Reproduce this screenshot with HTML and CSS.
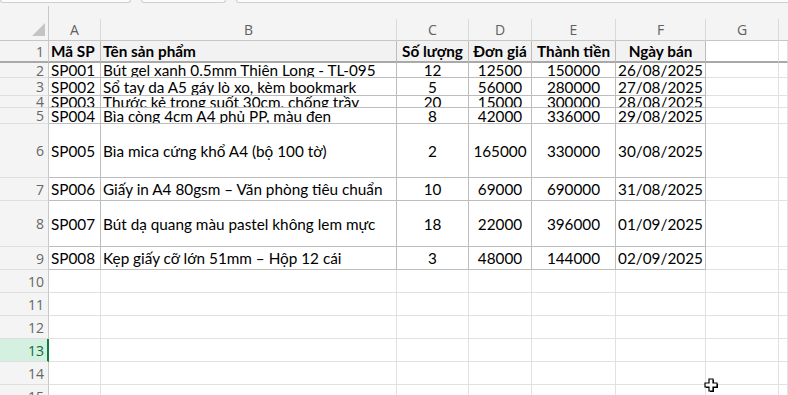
FILE: index.html
```html
<!DOCTYPE html>
<html lang="vi">
<head>
<meta charset="utf-8">
<title>Sheet</title>
<link rel="stylesheet" href="styles.css">
</head>
<body>
<div class="app">
  <div class="topbar">
    <div class="fields">
      <div class="field f1"></div>
      <div class="field f2"></div>
      <div class="field f3"></div>
    </div>
    <div class="tb-rest"><div class="tb-left"></div></div>
  </div>
  <div class="sheet">
    <div class="ch corner"><svg width="13" height="13" viewBox="0 0 13 13"><polygon points="13,0 13,13 0,13" fill="#c4c4c4"/></svg></div>
    <div class="ch">A</div><div class="ch">B</div><div class="ch">C</div><div class="ch">D</div><div class="ch">E</div><div class="ch">F</div><div class="ch">G</div><div class="ch chlast"></div>

    <div class="rh r1">1</div>
    <div class="c d hd r1 l">Mã SP</div><div class="c d hd r1 l">Tên sản phẩm</div><div class="c d hd r1">Số lượng</div><div class="c d hd r1">Đơn giá</div><div class="c d hd r1">Thành tiền</div><div class="c d hd r1">Ngày bán</div><div class="c r1"></div><div class="c r1"></div>

    <div class="rh">2</div>
    <div class="c d l">SP001</div><div class="c d l">Bút gel xanh 0.5mm Thiên Long - TL-095</div><div class="c d">12</div><div class="c d">12500</div><div class="c d">150000</div><div class="c d">26/08/2025</div><div class="c"></div><div class="c"></div>

    <div class="rh">3</div>
    <div class="c d l">SP002</div><div class="c d l">Sổ tay da A5 gáy lò xo, kèm bookmark</div><div class="c d">5</div><div class="c d">56000</div><div class="c d">280000</div><div class="c d">27/08/2025</div><div class="c"></div><div class="c"></div>

    <div class="rh">4</div>
    <div class="c d l">SP003</div><div class="c d l">Thước kẻ trong suốt 30cm, chống trầy</div><div class="c d">20</div><div class="c d">15000</div><div class="c d">300000</div><div class="c d">28/08/2025</div><div class="c"></div><div class="c"></div>

    <div class="rh">5</div>
    <div class="c d l">SP004</div><div class="c d l">Bìa còng 4cm A4 phủ PP, màu đen</div><div class="c d">8</div><div class="c d">42000</div><div class="c d">336000</div><div class="c d">29/08/2025</div><div class="c"></div><div class="c"></div>

    <div class="rh">6</div>
    <div class="c d l">SP005</div><div class="c d l">Bìa mica cứng khổ A4 (bộ 100 tờ)</div><div class="c d">2</div><div class="c d">165000</div><div class="c d">330000</div><div class="c d">30/08/2025</div><div class="c"></div><div class="c"></div>

    <div class="rh">7</div>
    <div class="c d l">SP006</div><div class="c d l">Giấy in A4 80gsm – Văn phòng tiêu chuẩn</div><div class="c d">10</div><div class="c d">69000</div><div class="c d">690000</div><div class="c d">31/08/2025</div><div class="c"></div><div class="c"></div>

    <div class="rh">8</div>
    <div class="c d l">SP007</div><div class="c d l">Bút dạ quang màu pastel không lem mực</div><div class="c d">18</div><div class="c d">22000</div><div class="c d">396000</div><div class="c d">01/09/2025</div><div class="c"></div><div class="c"></div>

    <div class="rh">9</div>
    <div class="c d l">SP008</div><div class="c d l">Kẹp giấy cỡ lớn 51mm – Hộp 12 cái</div><div class="c d">3</div><div class="c d">48000</div><div class="c d">144000</div><div class="c d">02/09/2025</div><div class="c"></div><div class="c"></div>

    <div class="rh">10</div>
    <div class="c"></div><div class="c"></div><div class="c"></div><div class="c"></div><div class="c"></div><div class="c"></div><div class="c"></div><div class="c"></div>
    <div class="rh">11</div>
    <div class="c"></div><div class="c"></div><div class="c"></div><div class="c"></div><div class="c"></div><div class="c"></div><div class="c"></div><div class="c"></div>
    <div class="rh">12</div>
    <div class="c"></div><div class="c"></div><div class="c"></div><div class="c"></div><div class="c"></div><div class="c"></div><div class="c"></div><div class="c"></div>
    <div class="rh sel">13</div>
    <div class="c"></div><div class="c"></div><div class="c"></div><div class="c"></div><div class="c"></div><div class="c"></div><div class="c"></div><div class="c"></div>
    <div class="rh">14</div>
    <div class="c"></div><div class="c"></div><div class="c"></div><div class="c"></div><div class="c"></div><div class="c"></div><div class="c"></div><div class="c"></div>
    <div class="rh">15</div>
    <div class="c"></div><div class="c"></div><div class="c"></div><div class="c"></div><div class="c"></div><div class="c"></div><div class="c"></div><div class="c"></div>
  </div>
  <svg class="cursor" width="15" height="15" viewBox="0 0 15 15">
    <polygon points="5,1 9,1 9,5 13,5 13,9 9,9 9,13 5,13 5,9 1,9 1,5 5,5" fill="#000" transform="translate(1,1)"/>
    <polygon points="5,1 9,1 9,5 13,5 13,9 9,9 9,13 5,13 5,9 1,9 1,5 5,5" fill="#fff" stroke="#000" stroke-width="1.2"/>
  </svg>
</div>
</body>
</html>
```
FILE: styles.css
```css
* { box-sizing: border-box; }
html, body { margin: 0; padding: 0; }
body {
  width: 788px;
  height: 395px;
  overflow: hidden;
  background: #ffffff;
  font-family: Lato, "Noto Sans", sans-serif;
}
.app {
  position: relative;
  width: 788px;
  height: 395px;
  overflow: hidden;
  background: #f4f4f4;
}
.topbar {
  height: 19px;
  display: flex;
  flex-direction: column;
  background: #f4f4f4;
}
.fields {
  height: 3px;
  display: flex;
  gap: 10px;
}
.field {
  height: 3px;
  border: 1px solid #cfcfcf;
  border-top: none;
  border-radius: 0 0 4px 4px;
  background: #fbfbfb;
}
.f1 { width: 131px; }
.f2 { width: 85px; }
.f3 { flex: 1; margin-right: -6px; }
.tb-rest { flex: 1; display: flex; }
.tb-left {
  width: 49px;
  margin-top: 3px;
  border-right: 1px solid #c8c8c8;
}
.sheet {
  display: grid;
  grid-template-columns: 49px 52px 296px 72px 63px 84px 90px 73px 1fr;
  grid-template-rows: 22px 22px 15px 18px 12px 16px 54px 23px 46px 23px 23px 23px 23px 23px 23px 23px;
}
.ch {
  display: flex;
  align-items: center;
  justify-content: center;
  font-family: "Open Sans", "Noto Sans", sans-serif;
  font-size: 14px;
  color: #616161;
  background: #f4f4f4;
  border-right: 1px solid #dadada;
  border-bottom: 1px solid #c6c6c6;
}
.corner {
  justify-content: flex-end;
  align-items: flex-end;
  padding: 0 3px 4px 0;
  border-right-color: #c8c8c8;
}
.corner svg { display: block; }
.chlast { border-right: none; }
.rh {
  display: flex;
  align-items: center;
  justify-content: flex-end;
  padding-right: 4px;
  font-family: "Open Sans", "Noto Sans", sans-serif;
  font-size: 14px;
  color: #666666;
  background: #f4f4f4;
  border-right: 1px solid #c8c8c8;
  border-bottom: 1px solid #dedede;
  overflow: hidden;
}
.rh.sel {
  background: #d3f0e0;
  color: #0e6b37;
  border-right: 2px solid #107c41;
  padding-right: 3px;
}
.c {
  display: flex;
  align-items: center;
  justify-content: center;
  padding: 0 2px;
  font-size: 15.3px;
  color: #000000;
  white-space: nowrap;
  overflow: hidden;
  background: #ffffff;
  border-right: 1px solid #e1e1e1;
  border-bottom: 1px solid #e1e1e1;
}
.c.d {
  border-right-color: #bdbdbd;
  border-bottom-color: #bdbdbd;
}
.c.l { justify-content: flex-start; }
.c.hd {
  background: #f2f2f2;
  font-weight: 700;
}
.r1 { border-bottom: 2px solid #a9a9a9 !important; }
.cursor {
  position: absolute;
  left: 704px;
  top: 378px;
}
```
